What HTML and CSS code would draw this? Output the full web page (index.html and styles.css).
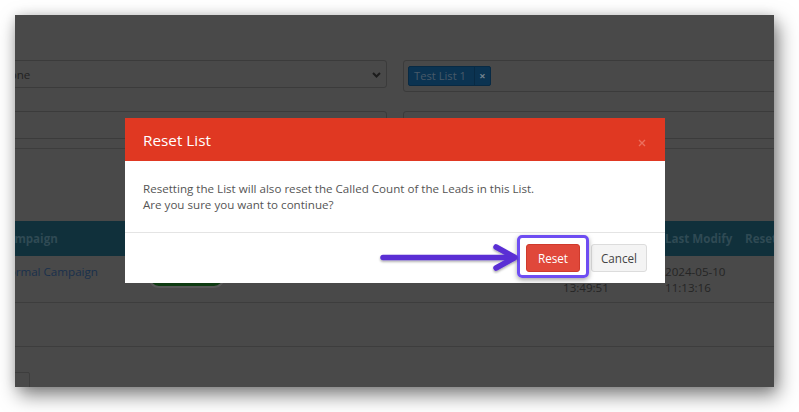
FILE: index.html
```html
<!DOCTYPE html>
<html>
<head>
<meta charset="utf-8">
<link rel="stylesheet" href="styles.css">
</head>
<body>
<div class="frame">
  <div class="page">
    <div class="form">
      <div class="select">
        <span class="select-text">None</span>
        <svg class="chev" width="9" height="6" viewBox="0 0 9 6"><path d="M1 1 L4.5 4.5 L8 1" fill="none" stroke="#1c1c1c" stroke-width="2"/></svg>
      </div>
      <div class="tagbox">
        <span class="tag"><span class="tag-text">Test List 1</span><span class="tag-x">×</span></span>
      </div>
      <div class="input"></div>
      <div class="input"></div>
    </div>

    <div class="table">
      <div class="trow thead">
        <div class="cell">Campaign</div>
        <div class="cell">Status</div>
        <div class="cell">Description</div>
        <div class="cell">Created</div>
        <div class="cell">Last Modify</div>
        <div class="cell">Reset</div>
      </div>
      <div class="trow tbody">
        <div class="cell link">Normal Campaign</div>
        <div class="cell"><span class="pill"></span></div>
        <div class="cell"></div>
        <div class="cell">2024-05-10<br>13:49:51</div>
        <div class="cell">2024-05-10<br>11:13:16</div>
        <div class="cell"></div>
      </div>
      <div class="trow tempty"></div>
    </div>
    <div class="pager">n</div>
  </div>

  <div class="modal">
    <div class="modal-header">
      <span class="modal-title">Reset List</span>
      <svg class="close" width="8" height="8" viewBox="0 0 8 8"><path d="M1 1 L7 7 M7 1 L1 7" stroke="#ec6f5e" stroke-width="1.4" fill="none"/></svg>
    </div>
    <div class="modal-body">
      Resetting the List will also reset the Called Count of the Leads in this List.<br>
      Are you sure you want to continue?
    </div>
    <div class="modal-footer">
      <button class="btn btn-reset">Reset</button>
      <button class="btn btn-cancel">Cancel</button>
    </div>
  </div>

  <div class="highlight"></div>
  <svg class="arrow" width="146" height="32" viewBox="0 0 146 32">
    <g fill="none" stroke="#5a2fd4" stroke-width="5.5" stroke-linecap="round" stroke-linejoin="round" filter="url(#sh)">
      <path d="M6 15.5 L136 15.5"/>
      <path d="M119 5 L138 15.5 L119 26"/>
    </g>
    <defs>
      <filter id="sh" x="-10%" y="-50%" width="120%" height="200%">
        <feDropShadow dx="0" dy="1.5" stdDeviation="1" flood-color="#000" flood-opacity="0.35"/>
      </filter>
    </defs>
  </svg>
</div>
</body>
</html>
```

FILE: styles.css
```css
* { box-sizing: border-box; }
html, body { margin: 0; padding: 0; background: #fff; }
body {
  font-family: "Open Sans", "Noto Sans", sans-serif;
  width: 799px;
  height: 412px;
  overflow: hidden;
}
.frame {
  position: relative;
  margin: 15px 0 0 15px;
  width: 759px;
  height: 372px;
  background: #494949;
  overflow: hidden;
  box-shadow: 0 0 10px rgba(0,0,0,0.12), 4px 8px 18px rgba(0,0,0,0.5);
}
.page {
  margin-left: -25px;
  width: 1100px;
  padding-top: 45px;
}
.form {
  display: grid;
  grid-template-columns: 397px 700px;
  column-gap: 16px;
  row-gap: 19px;
  align-items: start;
  padding-bottom: 9px;
  border-bottom: 1px solid #3d3d3d;
}
.select, .input {
  height: 28px;
  border: 1px solid #3b3b3b;
  border-radius: 3px;
}
.select {
  display: flex;
  align-items: center;
  justify-content: space-between;
  padding: 0 5px 0 10px;
  font-size: 11.6px;
  color: #222;
}
.chev { margin-top: 1px; }
.tagbox {
  height: 32px;
  border: 1px solid #3b3b3b;
  border-radius: 3px;
  padding: 5px 4px;
  display: flex;
  align-items: flex-start;
}
.tag {
  display: flex;
  height: 20px;
  background: #0b3351;
  border: 1px solid #082a44;
  border-radius: 2px;
  font-size: 11.2px;
  line-height: 18px;
}
.tag-text { padding: 0 8px 0 5px; color: #485a69; }
.tag-x {
  width: 16px;
  text-align: center;
  border-left: 1px solid #082a44;
  color: #74838f;
  font-size: 11px;
  font-weight: 700;
}
.table { margin-top: 72px; }
.trow {
  display: grid;
  grid-template-columns: 150px 200px 215px 102px 80px 100px;
}
.cell { padding: 0 8px; white-space: nowrap; }
.trow .cell:first-child { padding-left: 10px; }
.thead {
  height: 35px;
  background: #10303b;
  align-items: center;
  font-size: 11.6px;
  font-weight: 700;
  color: #2f4a54;
}
.tbody {
  height: 47px;
  padding-top: 8px;
  font-size: 11.6px;
  line-height: 16px;
  color: #252525;
  border-bottom: 1px solid #3d3d3d;
}
.link { color: #19304c; }
.pill {
  display: block;
  margin-top: 2px;
  width: 77px;
  height: 22px;
  border-radius: 11px;
  background: #0e3b12;
  border: 2px solid #575757;
}
.tempty {
  height: 44px;
  border-bottom: 1px solid #3d3d3d;
}
.pager {
  margin-top: 25px;
  margin-left: 10px;
  width: 30px;
  height: 30px;
  border: 1px solid #3d3d3d;
  border-radius: 2px;
  font-size: 12px;
  color: #222;
  padding: 8px 0 0 5px;
}
.modal {
  position: absolute;
  left: 110px;
  top: 103px;
  width: 540px;
  background: #fff;
}
.modal-header {
  height: 43px;
  background: #e03822;
  display: flex;
  align-items: center;
  justify-content: space-between;
  padding: 0 19px 0 18px;
}
.modal-title {
  color: #fff;
  font-size: 15.3px;
  font-weight: 500;
}
.close { margin-top: 6px; }
.modal-body {
  padding: 20px 18px 19px 18px;
  font-size: 11.6px;
  line-height: 16px;
  color: #555;
  border-bottom: 1px solid #e4e4e4;
}
.modal-footer {
  display: flex;
  justify-content: flex-end;
  gap: 11px;
  padding: 11px 18px 11px 18px;
}
.btn {
  font-family: "Open Sans", "Noto Sans", sans-serif;
  font-size: 11.7px;
  height: 28px;
  line-height: 26px;
  border-radius: 3px;
  margin: 0;
}
.btn-reset {
  width: 54px;
  padding: 0;
  background: #e0483a;
  border: 1px solid #cf3a2c;
  color: #fff;
}
.btn-cancel {
  width: 56px;
  padding: 0;
  background: #f4f4f4;
  border: 1px solid #dcdcdc;
  color: #444;
}
.highlight {
  position: absolute;
  left: 502px;
  top: 220px;
  width: 72px;
  height: 43px;
  border: 3px solid #6e4df2;
  border-radius: 5px;
  box-shadow: 0 2px 5px rgba(0,0,0,0.35);
}
.arrow {
  position: absolute;
  left: 362px;
  top: 227px;
}
```
